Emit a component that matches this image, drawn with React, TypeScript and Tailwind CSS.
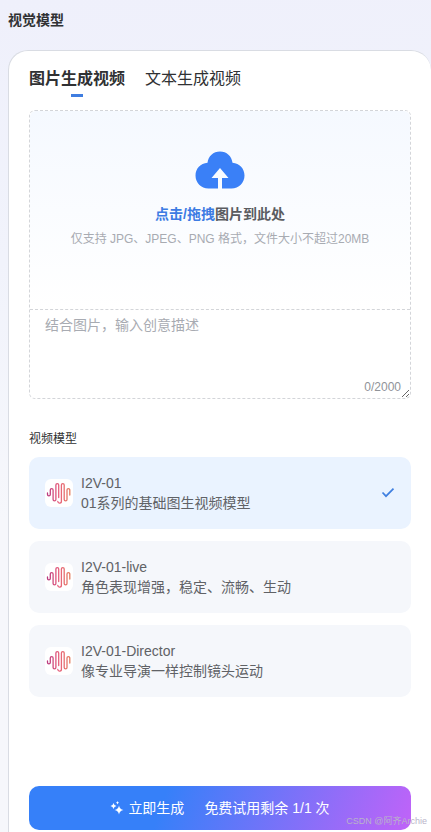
import { useState } from 'react'

const models = [
  { name: 'I2V-01', desc: '01系列的基础图生视频模型' },
  { name: 'I2V-01-live', desc: '角色表现增强，稳定、流畅、生动' },
  { name: 'I2V-01-Director', desc: '像专业导演一样控制镜头运动' },
]

const tabs = ['图片生成视频', '文本生成视频']

const CloudIcon = () => (
  <svg className="h-[38px] w-[50px]" viewBox="0 0 50 38" aria-hidden="true">
    <path
      fill="#3a80f7"
      d="M13.5 37.5C6 37.5.5 31.8.5 24.500c0-6.800 5-12.400 12-12.800C13.200 5.300 18.400.5 25 .5s11.800 4.800 12.500 11.200c7 .4 12 6 12 12.800 0 7.300-5.500 13-13 13H27V27h6.500L25 17 16.500 27H23v10.500z"
    />
  </svg>
)

const WaveIcon = () => (
  <svg className="h-7 w-7 shrink-0 rounded-md bg-white" viewBox="0 0 28 28" aria-hidden="true">
    <defs>
      <linearGradient id="wave" gradientUnits="userSpaceOnUse" x1="2" y1="0" x2="26" y2="0">
        <stop offset="0" stopColor="#b8387f" />
        <stop offset="0.5" stopColor="#e8607c" />
        <stop offset="1" stopColor="#e3805f" />
      </linearGradient>
    </defs>
    <path
      fill="none"
      stroke="url(#wave)"
      strokeWidth="1.300"
      strokeLinecap="round"
      d="M2.500 14v1.500a1.400 1.400 0 0 0 2.800 0V11a1.400 1.400 0 0 1 2.800 0V20.500a1.400 1.400 0 0 0 2.800 0V6a1.400 1.400 0 0 1 2.800 0V18.500M12.800 22.500a1.800 1.800 0 0 0 3.600-.5V6a1.400 1.400 0 0 1 2.800 0V20.500a1.400 1.400 0 0 0 2.800 0V11a1.400 1.400 0 0 1 2.800 0V16"
    />
  </svg>
)

const SparkleIcon = () => (
  <svg className="h-[14px] w-[14px]" viewBox="0 0 14 14" fill="#fff" aria-hidden="true">
    <path d="M9 4.500Q9.600 8.400 13.500 9 9.600 9.600 9 13.500 8.400 9.600 4.500 9 8.400 8.400 9 4.500z" />
    <path d="M3.500 2Q4 4.600 6.500 5 4 5.400 3.500 8 3 5.400.5 5 3 4.600 3.500 2z" />
    <path d="M7.500 0Q7.800 1.500 9.200 1.800 7.800 2.100 7.500 3.500 7.200 2.100 5.800 1.800 7.200 1.500 7.500 0z" />
  </svg>
)

const CheckIcon = () => (
  <svg className="h-[14px] w-[14px]" viewBox="0 0 14 14" aria-hidden="true">
    <path d="M1.500 6.500 5 10.200l7.500-7.500" fill="none" stroke="#3f7fe0" strokeWidth="1.700" />
  </svg>
)

const App = () => {
  const [tab, setTab] = useState(0)
  const [selected, setSelected] = useState(0)
  const [prompt, setPrompt] = useState('')

  return (
    <div className="flex min-h-screen flex-col bg-[linear-gradient(175deg,#eff0fb,#f1f3fb_30%,#f6f7fb_60%)] pl-2 font-['Liberation_Sans','Noto_Sans_CJK_SC',sans-serif] text-[#303133]">
      <h1 className="pt-[10px] pb-5 text-sm font-bold">视觉模型</h1>

      <main className="flex flex-1 flex-col rounded-t-[20px] border-t border-l border-[#d9dce3] bg-white px-5 pt-4">
        <div className="flex gap-5" role="tablist">
          {tabs.map((label, i) => (
            <button
              key={label}
              type="button"
              role="tab"
              aria-selected={tab === i}
              onClick={() => setTab(i)}
              className={`flex flex-col items-center gap-[3px] text-base ${tab === i ? 'font-bold' : ''}`}
            >
              {label}
              <span className={`h-[3px] w-3 ${tab === i ? 'bg-[#3f7de0]' : ''}`} />
            </button>
          ))}
        </div>

        <div className="mt-[13px] rounded-md border border-dashed border-[#d3d5d9]">
          <label className="relative flex h-[198px] cursor-pointer flex-col items-center rounded-t-md bg-gradient-to-b from-[#f5f9ff] to-white pt-10">
            <input type="file" accept=".jpg,.jpeg,.png" className="sr-only" />
            <CloudIcon />
            <span className="mt-[15px] text-sm font-bold text-[#5a5c61]">
              <span className="text-[#3d7be3]">点击/拖拽</span>图片到此处
            </span>
            <span className="mt-[5px] text-xs leading-5 text-[#a8abb2]">
              仅支持 JPG、JPEG、PNG 格式，文件大小不超过20MB
            </span>
          </label>
          <div className="relative border-t border-dashed border-[#d3d5d9]">
            <textarea
              aria-label="结合图片，输入创意描述"
              placeholder="结合图片，输入创意描述"
              maxLength={2000}
              value={prompt}
              onChange={(e) => setPrompt(e.target.value)}
              className="block h-[88px] w-full px-[15px] py-[5px] text-sm leading-5 outline-none placeholder:text-[#a8abb2]"
            />
            <span className="absolute right-[9px] bottom-[3px] text-xs text-[#909399]">
              {prompt.length}/2000
            </span>
          </div>
        </div>

        <fieldset>
          <legend className="pt-8 text-xs">视频模型</legend>
          <div className="mt-[10px] flex flex-col gap-3">
            {models.map((model, i) => (
              <label
                key={model.name}
                className={`relative flex h-[72px] cursor-pointer items-center gap-2 rounded-[10px] px-4 text-sm text-[#606266] ${
                  selected === i ? 'bg-[#eaf3ff]' : 'bg-[#f5f7fb]'
                }`}
              >
                <input
                  type="radio"
                  name="model"
                  checked={selected === i}
                  onChange={() => setSelected(i)}
                  className="sr-only"
                />
                <WaveIcon />
                <span className="flex flex-1 flex-col">
                  <span>{model.name}</span>
                  <span>{model.desc}</span>
                </span>
                {selected === i && <CheckIcon />}
              </label>
            ))}
          </div>
        </fieldset>

        <div className="relative mt-auto pt-6 pb-[2px]">
          <button
            type="button"
            className="flex h-11 w-full items-center justify-center gap-1 rounded-[10px] bg-[linear-gradient(110deg,#3680f9_35%,#c063f8)] text-sm text-white"
          >
            <SparkleIcon />
            <span>立即生成</span>
            <span className="ml-4">免费试用剩余 1/1 次</span>
          </button>
          <span className="absolute -right-4 bottom-1 text-[9px] text-[#b9b3c9]">CSDN @阿齐Archie</span>
        </div>
      </main>
    </div>
  )
}

export default App
